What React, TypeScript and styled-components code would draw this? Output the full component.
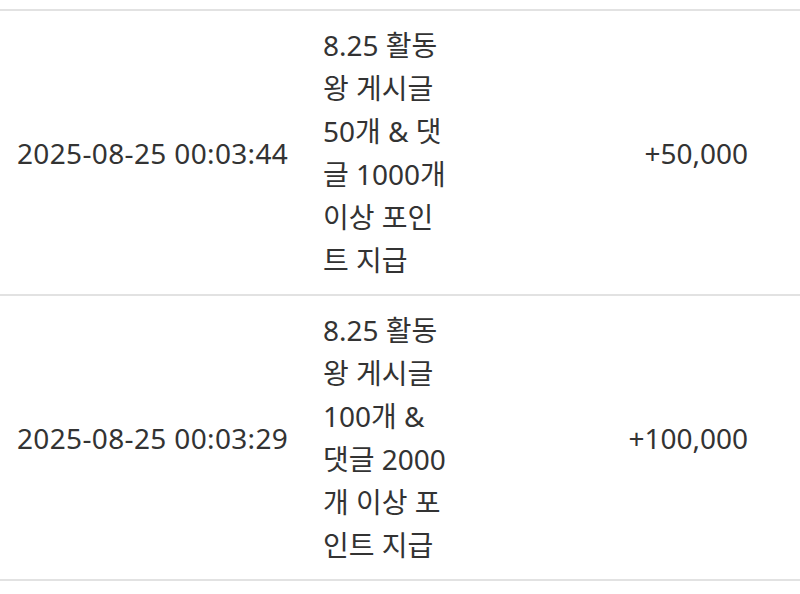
import styled, { createGlobalStyle } from 'styled-components';

interface PointLog {
	date: string;
	reason: string;
	amount: string;
}

const logs: PointLog[] = [
	{
		date: '2025-08-25 00:03:44',
		reason: '8.25 활동왕 게시글 50개 & 댓글 1000개 이상 포인트 지급',
		amount: '+50,000',
	},
	{
		date: '2025-08-25 00:03:29',
		reason: '8.25 활동왕 게시글 100개 & 댓글 2000개 이상 포인트 지급',
		amount: '+100,000',
	},
];

const GlobalStyle = createGlobalStyle`
	body {
		margin: 0;
		background: #fff;
		font-family: 'Noto Sans', 'Noto Sans CJK KR', sans-serif;
		color: #333;
	}
`;

const App = () => {
	return (
		<>
			<GlobalStyle />
			<List>
				{logs.map((log) => (
					<Row key={log.date}>
						<DateCell>{log.date}</DateCell>
						<ReasonCell>{log.reason}</ReasonCell>
						<AmountCell>{log.amount}</AmountCell>
					</Row>
				))}
			</List>
		</>
	);
};

const List = styled.div`
	margin-top: 9px;
	border-top: 2px solid #e2e2e2;
`;

const Row = styled.div`
	display: grid;
	grid-template-columns: 306px 130px 1fr;
	align-items: center;

	padding: 13px 52px 12px 17px;

	border-bottom: 2px solid #e2e2e2;

	font-size: 28px;
	line-height: 43px;
`;

const DateCell = styled.div`
	white-space: nowrap;
	letter-spacing: 0.35px;
`;

const ReasonCell = styled.div`
	word-break: break-all;
`;

const AmountCell = styled.div`
	text-align: right;
`;

export default App;
